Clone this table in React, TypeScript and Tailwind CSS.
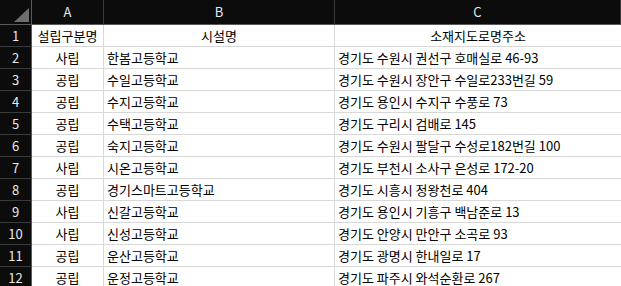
import React from "react";

const rows: [string, string, string][] = [
  ["설립구분명", "시설명", "소재지도로명주소"],
  ["사립", "한봄고등학교", "경기도 수원시 권선구 호매실로 46-93"],
  ["공립", "수일고등학교", "경기도 수원시 장안구 수일로233번길 59"],
  ["공립", "수지고등학교", "경기도 용인시 수지구 수풍로 73"],
  ["공립", "수택고등학교", "경기도 구리시 검배로 145"],
  ["공립", "숙지고등학교", "경기도 수원시 팔달구 수성로182번길 100"],
  ["사립", "시온고등학교", "경기도 부천시 소사구 은성로 172-20"],
  ["공립", "경기스마트고등학교", "경기도 시흥시 정왕천로 404"],
  ["사립", "신갈고등학교", "경기도 용인시 기흥구 백남준로 13"],
  ["사립", "신성고등학교", "경기도 안양시 만안구 소곡로 93"],
  ["공립", "운산고등학교", "경기도 광명시 한내일로 17"],
  ["공립", "운정고등학교", "경기도 파주시 와석순환로 267"],
];

const font = {
  fontFamily: '"Noto Sans CJK KR", "Noto Sans", sans-serif',
};

export default function App() {
  return (
    <div
      className="w-[621px] h-[286px] overflow-hidden bg-white text-[13px] text-black"
      style={font}
    >
      <div className="grid grid-cols-[32px_72px_231px_1fr]">
        {/* header */}
        <div className="h-[25px] bg-[#0c0c0c] border-r border-b border-[#5a5a5a] relative">
          <div className="absolute left-[14px] top-[8px] w-0 h-0 border-l-[15px] border-l-transparent border-b-[14px] border-b-[#6e6e6e]" />
        </div>
        {["A", "B", "C"].map((h) => (
          <div
            key={h}
            className="h-[25px] bg-[#0c0c0c] border-r border-b border-[#3a3a3a] border-b-[#5a5a5a] text-[#e8e8e8] flex items-center justify-center"
          >
            {h}
          </div>
        ))}
        {rows.map((r, i) => (
          <React.Fragment key={i}>
            <div className="h-[22px] bg-[#0c0c0c] border-r border-b border-[#5a5a5a] border-b-[#3a3a3a] text-[#e8e8e8] flex items-center justify-center">
              {i + 1}
            </div>
            <div className="h-[22px] border-r border-b border-[#d8d8d8] flex items-center justify-center whitespace-nowrap">
              {r[0]}
            </div>
            <div
              className={`h-[22px] border-r border-b border-[#d8d8d8] flex items-center whitespace-nowrap ${
                i === 0 ? "justify-center" : "pl-[3px]"
              }`}
            >
              {r[1]}
            </div>
            <div
              className={`h-[22px] border-b border-[#d8d8d8] flex items-center whitespace-nowrap ${
                i === 0 ? "justify-center" : "pl-[3px]"
              }`}
            >
              {r[2]}
            </div>
          </React.Fragment>
        ))}
      </div>
    </div>
  );
}
